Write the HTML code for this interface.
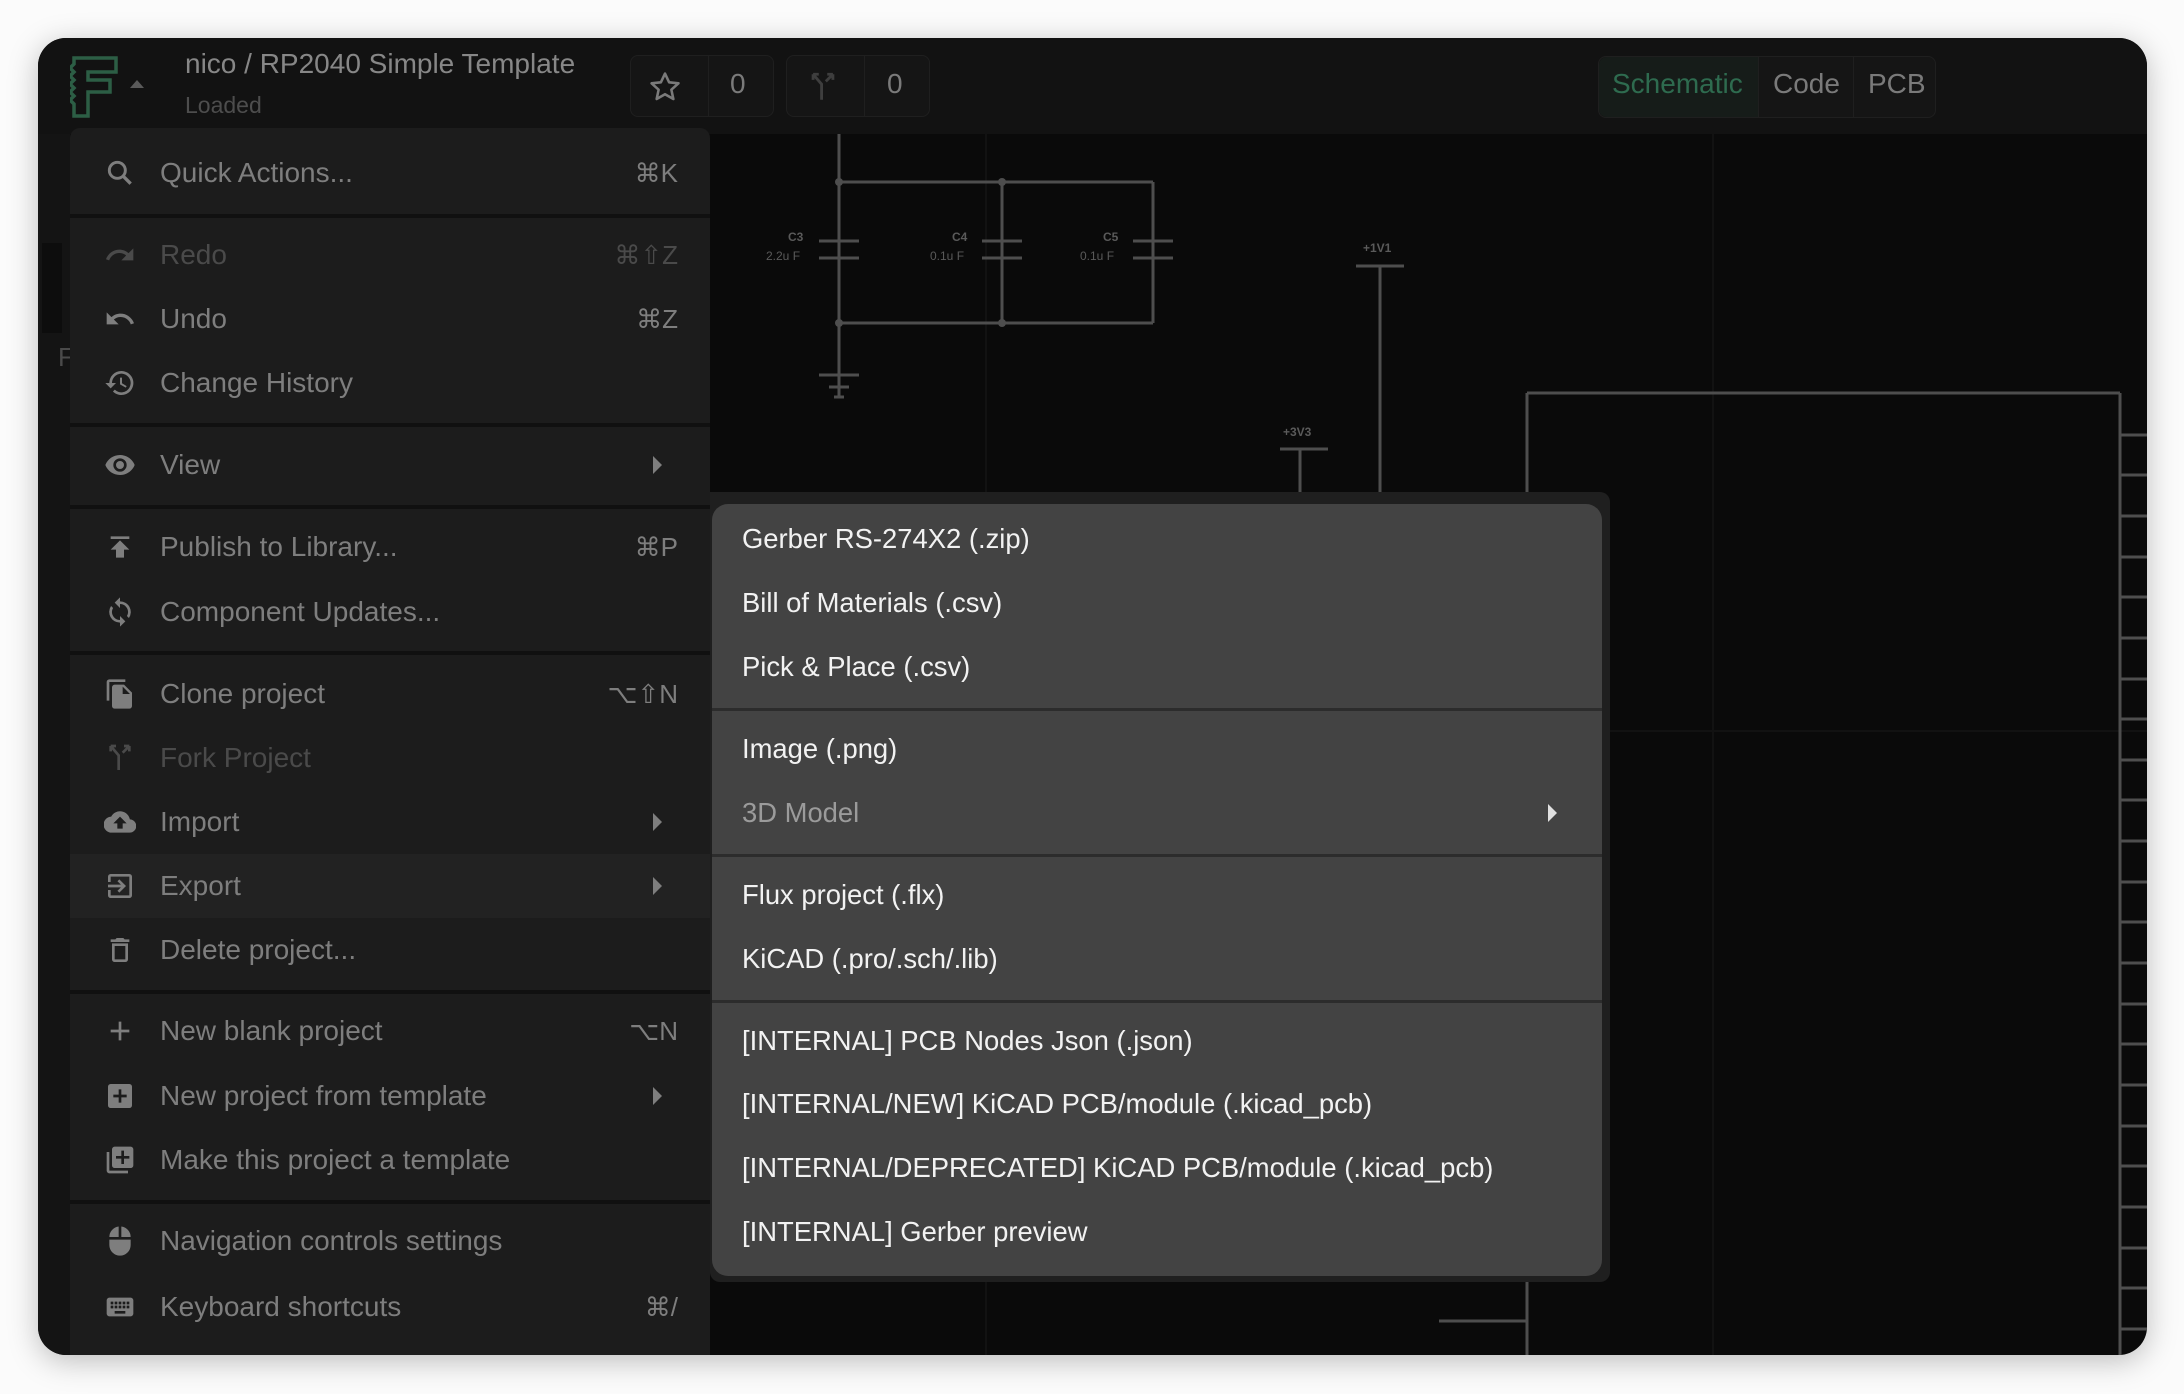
<!DOCTYPE html>
<html><head><meta charset="utf-8"><style>
*{margin:0;padding:0;box-sizing:border-box}
body{width:2184px;height:1394px;background:#fbfbfb;position:relative;overflow:hidden;font-family:"Liberation Sans",sans-serif}
.win{position:absolute;left:38px;top:38px;width:2109px;height:1317px;border-radius:28px;background:#0a0a0a;overflow:hidden;box-shadow:0 6px 30px rgba(0,0,0,.25)}
.hdr{position:absolute;left:0;top:0;width:100%;height:96px;background:#121212}
.abs{position:absolute}
.box{position:absolute;border:1px solid #1f1f1f;background:#151515;border-radius:8px}
.menu{position:absolute;left:32px;top:90px;width:640px;height:1300px;background:#1c1c1c;border-radius:10px 10px 0 0}
.it{position:absolute;left:0;width:640px;height:64px;display:flex;align-items:center;color:#7e7e7e;font-size:28px}
.it .t{position:absolute;left:90px}
.it .k{position:absolute;right:32px;font-size:26px}
.it .a{position:absolute;right:48px;width:0;height:0;border-left:9px solid #7e7e7e;border-top:9px solid transparent;border-bottom:9px solid transparent}
.it svg{position:absolute;left:34px;width:32px;height:32px}
.sep{position:absolute;left:0;width:640px;height:4px;background:#101010}
.sub{position:absolute;left:672px;top:454px;width:900px;height:790px;background:#1f1f1f;border-radius:0 10px 10px 10px}
.pan{position:absolute;left:674px;top:466px;width:890px;height:772px;background:#434343;border-radius:16px}
.si{position:absolute;left:30px;color:#f2f2f2;font-size:27.4px;line-height:40px}
.ss{position:absolute;left:0;width:890px;height:3px;background:#2c2c2c}
.sch line,.sch rect{stroke:#4e4e4e;stroke-width:3;fill:none}
.sch text{fill:#5a5a5a;font-family:"Liberation Sans",sans-serif;font-size:12px}
</style></head><body>
<div class="win">
<svg class="abs sch" style="left:0;top:0" width="2109" height="1317">
<line x1="948" y1="96" x2="948" y2="1317" style="stroke:#121212;stroke-width:2"/>
<line x1="1675" y1="96" x2="1675" y2="1317" style="stroke:#121212;stroke-width:2"/>
<line x1="1489" y1="693" x2="2109" y2="693" style="stroke:#121212;stroke-width:2"/>
<line x1="801" y1="96" x2="801" y2="359"/>
<line x1="801" y1="144" x2="1115" y2="144"/>
<line x1="801" y1="285" x2="1115" y2="285"/>
<line x1="964" y1="144" x2="964" y2="285"/>
<line x1="1115" y1="144" x2="1115" y2="285"/>
<g style="stroke:#0a0a0a;stroke-width:14"><line x1="801" y1="204" x2="801" y2="224"/><line x1="964" y1="204" x2="964" y2="224"/><line x1="1115" y1="204" x2="1115" y2="224"/></g>
<line x1="781" y1="203" x2="821" y2="203"/><line x1="781" y1="220" x2="821" y2="220"/>
<line x1="944" y1="203" x2="984" y2="203"/><line x1="944" y1="220" x2="984" y2="220"/>
<line x1="1095" y1="203" x2="1135" y2="203"/><line x1="1095" y1="220" x2="1135" y2="220"/>
<line x1="781" y1="337" x2="821" y2="337"/><line x1="791" y1="349" x2="811" y2="349"/><line x1="796" y1="359" x2="806" y2="359"/>
<circle cx="801" cy="144" r="4" fill="#4e4e4e"/><circle cx="801" cy="285" r="4" fill="#4e4e4e"/><circle cx="964" cy="144" r="4" fill="#4e4e4e"/><circle cx="964" cy="285" r="4" fill="#4e4e4e"/>
<text x="750" y="203" font-weight="bold">C3</text><text x="728" y="222">2.2u F</text>
<text x="914" y="203" font-weight="bold">C4</text><text x="892" y="222">0.1u F</text>
<text x="1065" y="203" font-weight="bold">C5</text><text x="1042" y="222">0.1u F</text>
<text x="1325" y="214" font-weight="bold">+1V1</text><line x1="1318" y1="228" x2="1366" y2="228"/><line x1="1342" y1="228" x2="1342" y2="460"/>
<text x="1245" y="398" font-weight="bold">+3V3</text><line x1="1242" y1="411" x2="1290" y2="411"/><line x1="1262" y1="411" x2="1262" y2="460"/>
<line x1="1489" y1="355" x2="1489" y2="1317"/><line x1="1489" y1="355" x2="2082" y2="355"/><line x1="2082" y1="355" x2="2082" y2="1317"/>
<g>
<line x1="2082" y1="397" x2="2109" y2="397"/><line x1="2082" y1="437" x2="2109" y2="437"/><line x1="2082" y1="478" x2="2109" y2="478"/><line x1="2082" y1="519" x2="2109" y2="519"/><line x1="2082" y1="559" x2="2109" y2="559"/><line x1="2082" y1="600" x2="2109" y2="600"/><line x1="2082" y1="641" x2="2109" y2="641"/><line x1="2082" y1="681" x2="2109" y2="681"/><line x1="2082" y1="722" x2="2109" y2="722"/><line x1="2082" y1="762" x2="2109" y2="762"/><line x1="2082" y1="803" x2="2109" y2="803"/><line x1="2082" y1="844" x2="2109" y2="844"/><line x1="2082" y1="884" x2="2109" y2="884"/><line x1="2082" y1="925" x2="2109" y2="925"/><line x1="2082" y1="966" x2="2109" y2="966"/><line x1="2082" y1="1006" x2="2109" y2="1006"/><line x1="2082" y1="1047" x2="2109" y2="1047"/><line x1="2082" y1="1088" x2="2109" y2="1088"/><line x1="2082" y1="1128" x2="2109" y2="1128"/><line x1="2082" y1="1169" x2="2109" y2="1169"/><line x1="2082" y1="1210" x2="2109" y2="1210"/><line x1="2082" y1="1250" x2="2109" y2="1250"/><line x1="2082" y1="1291" x2="2109" y2="1291"/>
</g>
<line x1="1401" y1="1283" x2="1489" y2="1283"/>
</svg>
<div class="hdr"></div>
<div class="abs" style="left:0;top:188px;width:32px;height:3px;background:#2b6249"></div>
<div class="abs" style="left:0;top:96px;width:32px;height:1221px;background:#141414"></div>
<svg class="abs" style="left:32px;top:18px" width="48" height="62" viewBox="0 0 48 62"><path d="M4 2H46V16H18V24H40V36H18V60H4V48L0 44 4 40 0 36 4 32 0 28 4 24 0 20 4 16 0 12 4 8Z" fill="none" stroke="#2c5e45" stroke-width="3.5"/></svg>
<div class="abs" style="left:92px;top:42px;border-bottom:8px solid #5a5a5a;border-left:7px solid transparent;border-right:7px solid transparent"></div>
<div class="abs" style="left:147px;top:10px;color:#878787;font-size:28px">nico / RP2040 Simple Template</div>
<div class="abs" style="left:147px;top:54px;color:#4d4d4d;font-size:23px">Loaded</div>
<div class="box" style="left:592px;top:17px;width:144px;height:62px"></div>
<div class="abs" style="left:670px;top:17px;width:1px;height:62px;background:#1f1f1f"></div>
<svg class="abs" style="left:610px;top:32px" width="34" height="34" viewBox="0 0 24 24"><path d="M12 2.5l2.9 6.2 6.6.7-5 4.5 1.4 6.6L12 17.1 6.1 20.5l1.4-6.6-5-4.5 6.6-.7z" fill="none" stroke="#7a7a7a" stroke-width="1.8" stroke-linejoin="round"/></svg>
<div class="abs" style="left:692px;top:30px;color:#7a7a7a;font-size:28px">0</div>
<div class="box" style="left:748px;top:17px;width:144px;height:62px"></div>
<div class="abs" style="left:826px;top:17px;width:1px;height:62px;background:#1f1f1f"></div>
<svg class="abs" style="left:768px;top:32px" width="34" height="34" viewBox="0 0 24 24"><path d="M5 3v4M5 3h4M5 3l6 7v11M19 3v4M19 3h-4M19 3l-5 5" fill="none" stroke="#3e3e3e" stroke-width="2"/></svg>
<div class="abs" style="left:849px;top:30px;color:#7a7a7a;font-size:28px">0</div>
<div class="box" style="left:1560px;top:18px;width:338px;height:62px;background:#151515"></div>
<div class="abs" style="left:1561px;top:19px;width:159px;height:60px;background:#161c19;border-radius:8px 0 0 8px"></div>
<div class="abs" style="left:1720px;top:19px;width:1px;height:60px;background:#1f1f1f"></div>
<div class="abs" style="left:1815px;top:19px;width:1px;height:60px;background:#1f1f1f"></div>
<div class="abs" style="left:1574px;top:30px;color:#2e6b4f;font-size:28px">Schematic</div>
<div class="abs" style="left:1735px;top:30px;color:#7a7a7a;font-size:28px">Code</div>
<div class="abs" style="left:1830px;top:30px;color:#7a7a7a;font-size:28px">PCB</div>
<div class="abs" style="left:4px;top:205px;width:20px;height:90px;background:#0d0d0d"></div>
<div class="abs" style="left:20px;top:304px;color:#4a4a4a;font-size:26px">F</div>

<div class="menu">
<div class="it" style="top:13px"><svg viewBox="0 0 24 24"><circle cx="10" cy="10" r="6" fill="none" stroke="#7e7e7e" stroke-width="2.2"/><path d="M14.5 14.5L20 20" stroke="#7e7e7e" stroke-width="2.5"/></svg><span class="t">Quick Actions...</span><span class="k">⌘K</span></div>
<div class="sep" style="top:86px"></div>
<div class="it" style="top:95px;color:#4a4a4a"><svg viewBox="0 0 24 24"><path d="M18.4 10.6C16.6 9 14.2 8 11.5 8 6.9 8 3 11 1.5 15.2l2.4.8C5 12.8 8 10.5 11.5 10.5c2 0 3.8.7 5.1 1.9L13 16h9V7z" fill="#4a4a4a"/></svg><span class="t">Redo</span><span class="k">⌘⇧Z</span></div>
<div class="it" style="top:159px"><svg viewBox="0 0 24 24"><path d="M12.5 8c-2.7 0-5.1 1-6.9 2.6L2 7v9h9l-3.6-3.6c1.4-1.2 3.1-1.9 5.1-1.9 3.5 0 6.5 2.3 7.6 5.5l2.4-.8C21 11 17.1 8 12.5 8z" fill="#7e7e7e"/></svg><span class="t">Undo</span><span class="k">⌘Z</span></div>
<div class="it" style="top:223px"><svg viewBox="0 0 24 24"><path d="M13 3a9 9 0 0 0-9 9H1l4 4 4-4H6a7 7 0 1 1 2.1 5l-1.4 1.4A9 9 0 1 0 13 3zm-1 5v5l4.3 2.5.7-1.2-3.5-2.1V8z" fill="#7e7e7e"/></svg><span class="t">Change History</span></div>
<div class="sep" style="top:295px"></div>
<div class="it" style="top:305px"><svg viewBox="0 0 24 24"><path d="M12 4.5C7 4.5 2.7 7.6 1 12c1.7 4.4 6 7.5 11 7.5s9.3-3.1 11-7.5c-1.7-4.4-6-7.5-11-7.5zM12 17a5 5 0 1 1 0-10 5 5 0 0 1 0 10zm0-8a3 3 0 1 0 0 6 3 3 0 0 0 0-6z" fill="#7e7e7e"/></svg><span class="t">View</span><span class="a"></span></div>
<div class="sep" style="top:377px"></div>
<div class="it" style="top:387px"><svg viewBox="0 0 24 24"><path d="M5 4v2h14V4zm0 10h4v6h6v-6h4l-7-7z" fill="#7e7e7e"/></svg><span class="t">Publish to Library...</span><span class="k">⌘P</span></div>
<div class="it" style="top:452px"><svg viewBox="0 0 24 24"><path d="M12 4V1L8 5l4 4V6a6 6 0 0 1 5.2 9l1.5 1.5A8 8 0 0 0 12 4zm0 14a6 6 0 0 1-5.2-9L5.3 7.5A8 8 0 0 0 12 20v3l4-4-4-4z" fill="#7e7e7e"/></svg><span class="t">Component Updates...</span></div>
<div class="sep" style="top:523px"></div>
<div class="it" style="top:534px"><svg viewBox="0 0 24 24"><path d="M16 1H4a2 2 0 0 0-2 2v14h2V3h12zm-1 4H8a2 2 0 0 0-2 2v14a2 2 0 0 0 2 2h11a2 2 0 0 0 2-2V11zm-1 7V6.5l5.5 5.5z" fill="#7e7e7e"/></svg><span class="t">Clone project</span><span class="k">⌥⇧N</span></div>
<div class="it" style="top:598px;color:#4a4a4a"><svg viewBox="0 0 24 24"><path d="M5 3v4M5 3h4M5 3l6 7v11M19 3v4M19 3h-4M19 3l-5 5" fill="none" stroke="#4a4a4a" stroke-width="2"/></svg><span class="t">Fork Project</span></div>
<div class="it" style="top:662px"><svg viewBox="0 0 24 24"><path d="M19.4 10A7.5 7.5 0 0 0 5.4 8 6 6 0 0 0 6 20h13a5 5 0 0 0 .4-10zM14 13v4h-4v-4H7l5-5 5 5z" fill="#7e7e7e"/></svg><span class="t">Import</span><span class="a"></span></div>
<div class="it" style="top:726px;background:#222"><svg viewBox="0 0 24 24"><path d="M3 5v4h2V5h14v14H5v-4H3v4a2 2 0 0 0 2 2h14a2 2 0 0 0 2-2V5a2 2 0 0 0-2-2H5a2 2 0 0 0-2 2zm7.1 10.6L11.5 17l5-5-5-5-1.4 1.4 2.6 2.6H3v2h9.7z" fill="#7e7e7e"/></svg><span class="t">Export</span><span class="a"></span></div>
<div class="it" style="top:790px"><svg viewBox="0 0 24 24"><path d="M6 19a2 2 0 0 0 2 2h8a2 2 0 0 0 2-2V7H6zm2-10h8v10H8zm7.5-5-1-1h-5l-1 1H5v2h14V4z" fill="#7e7e7e"/></svg><span class="t">Delete project...</span></div>
<div class="sep" style="top:862px"></div>
<div class="it" style="top:871px"><svg viewBox="0 0 24 24"><path d="M12 5v14M5 12h14" stroke="#7e7e7e" stroke-width="2"/></svg><span class="t">New blank project</span><span class="k">⌥N</span></div>
<div class="it" style="top:936px"><svg viewBox="0 0 24 24"><path d="M19 3H5a2 2 0 0 0-2 2v14a2 2 0 0 0 2 2h14a2 2 0 0 0 2-2V5a2 2 0 0 0-2-2zm-2 10h-4v4h-2v-4H7v-2h4V7h2v4h4z" fill="#7e7e7e"/></svg><span class="t">New project from template</span><span class="a"></span></div>
<div class="it" style="top:1000px"><svg viewBox="0 0 24 24"><path d="M4 6H2v14a2 2 0 0 0 2 2h14v-2H4zm16-4H8a2 2 0 0 0-2 2v12a2 2 0 0 0 2 2h12a2 2 0 0 0 2-2V4a2 2 0 0 0-2-2zm-1 9h-4v4h-2v-4H9V9h4V5h2v4h4z" fill="#7e7e7e"/></svg><span class="t">Make this project a template</span></div>
<div class="sep" style="top:1072px"></div>
<div class="it" style="top:1081px"><svg viewBox="0 0 24 24"><path d="M13 1.1V9h7a8 8 0 0 0-7-7.9zM11 1.1A8 8 0 0 0 4 9h7zM4 11v4a8 8 0 0 0 16 0v-4z" fill="#7e7e7e"/></svg><span class="t">Navigation controls settings</span></div>
<div class="it" style="top:1147px"><svg viewBox="0 0 24 24"><path d="M20 5H4a2 2 0 0 0-2 2v10a2 2 0 0 0 2 2h16a2 2 0 0 0 2-2V7a2 2 0 0 0-2-2zm-9 3h2v2h-2zm0 3h2v2h-2zM8 8h2v2H8zm0 3h2v2H8zm-1 2H5v-2h2zm0-3H5V8h2zm9 7H8v-2h8zm0-4h-2v-2h2zm0-3h-2V8h2zm3 3h-2v-2h2zm0-3h-2V8h2z" fill="#7e7e7e"/></svg><span class="t">Keyboard shortcuts</span><span class="k">⌘/</span></div>
</div>

<div class="sub"></div>
<div class="pan">
<div class="si" style="top:15px">Gerber RS-274X2 (.zip)</div>
<div class="si" style="top:79px">Bill of Materials (.csv)</div>
<div class="si" style="top:143px">Pick &amp; Place (.csv)</div>
<div class="ss" style="top:204px"></div>
<div class="si" style="top:225px">Image (.png)</div>
<div class="si" style="top:289px;color:#9b9b9b">3D Model</div>
<div class="abs" style="left:836px;top:300px;border-left:9px solid #e0e0e0;border-top:9px solid transparent;border-bottom:9px solid transparent"></div>
<div class="ss" style="top:350px"></div>
<div class="si" style="top:371px">Flux project (.flx)</div>
<div class="si" style="top:435px">KiCAD (.pro/.sch/.lib)</div>
<div class="ss" style="top:496px"></div>
<div class="si" style="top:517px">[INTERNAL] PCB Nodes Json (.json)</div>
<div class="si" style="top:580px">[INTERNAL/NEW] KiCAD PCB/module (.kicad_pcb)</div>
<div class="si" style="top:644px">[INTERNAL/DEPRECATED] KiCAD PCB/module (.kicad_pcb)</div>
<div class="si" style="top:708px">[INTERNAL] Gerber preview</div>
</div>
</div>
</body></html>
